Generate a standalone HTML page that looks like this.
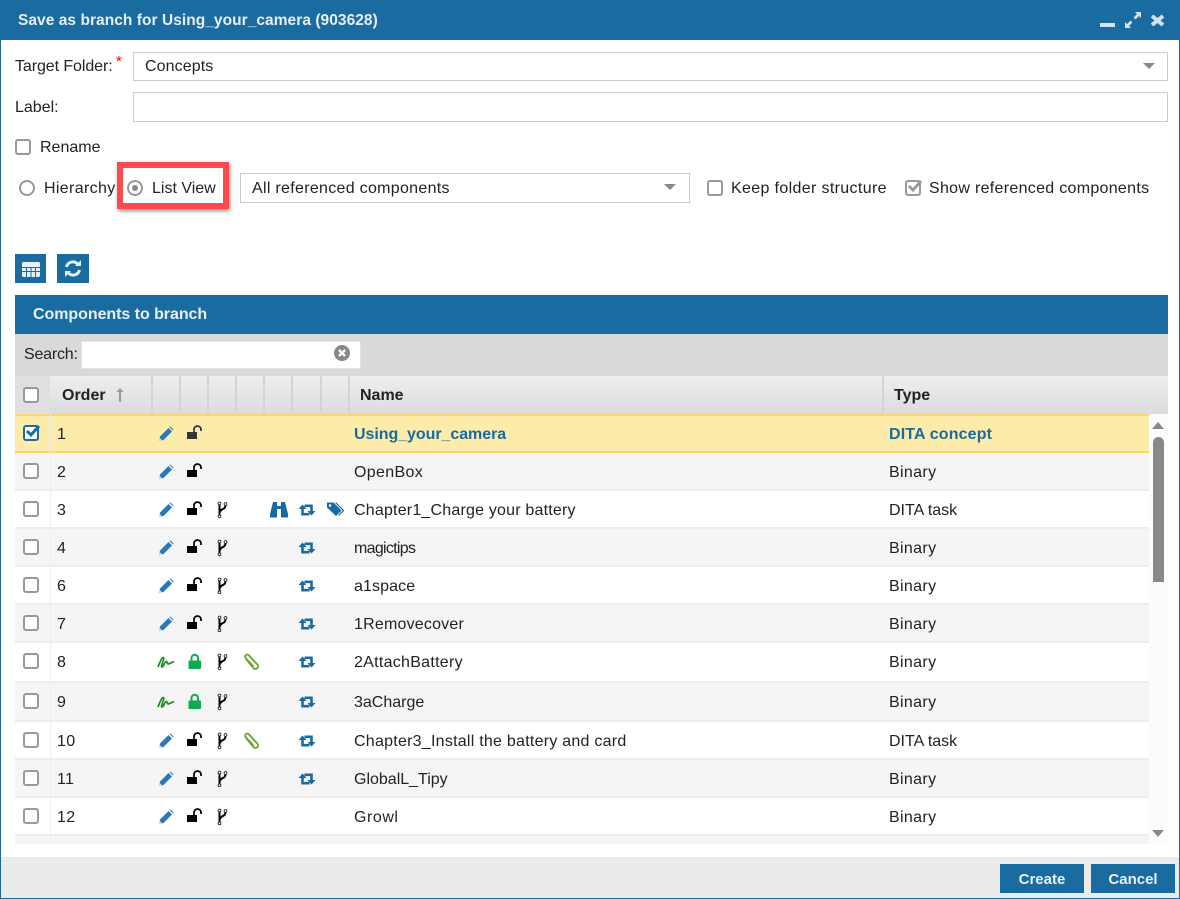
<!DOCTYPE html>
<html><head><meta charset="utf-8"><style>
html,body{margin:0;padding:0;width:1180px;height:899px;overflow:hidden;background:#fff}
body{position:relative;font-family:"Liberation Sans",sans-serif;font-size:16px;color:#222}
.a,.t{position:absolute}
.t{white-space:nowrap;line-height:20px;letter-spacing:.35px;margin-top:1px}
.b{position:absolute;box-sizing:border-box;border:1.5px solid #ccc;background:#fff}
.c{position:absolute;box-sizing:border-box;width:16px;height:16px;border:2px solid #999;border-radius:3px;background:#fff}
.r{position:absolute;box-sizing:border-box;left:15px;width:1134px;border-bottom:2px solid #ececec}
.g{background:#f5f5f5}
.s{position:absolute;top:376px;width:1.5px;height:37px;background:#d4d4d4}
svg.i{position:absolute;width:18px;height:18px;overflow:visible}
.h{font-weight:bold;color:#fff;letter-spacing:0}
.btn{position:absolute;top:864px;width:84px;height:29px;background:#1a6b9f;color:#e8f2f8;font-weight:bold;font-size:15px;line-height:32px;text-align:center}
</style></head><body>
<svg width="0" height="0" style="position:absolute"><defs>
<symbol id="pen" viewBox="0 0 18 18"><path d="M2 16l1-4.500L11.500 3 15 6.500 6.500 15z" fill="#2a78b4"/><path d="M12.500 2l1-.5 3 3-.5 1z" fill="#2a78b4"/><path d="M2 16l.8-3 2.200 2.200z" fill="#cfe0ee"/></symbol>
<symbol id="un" viewBox="0 0 18 18"><rect x="1" y="8" width="10" height="7" fill="#000"/><path d="M8 8V5.500a3.300 3.300 0 0 1 7 0V7" fill="none" stroke="#000" stroke-width="1.700"/></symbol>
<symbol id="un2" viewBox="0 0 18 18"><rect x="1" y="8" width="10" height="7" fill="#333"/><path d="M8 8V5.500a3.300 3.300 0 0 1 7 0V7" fill="none" stroke="#333" stroke-width="1.700"/></symbol>
<symbol id="br" viewBox="0 0 18 18"><path d="M5.500 3.500V15M5.500 11.500Q7 8.500 9 8 11.500 7 11.500 4" fill="none" stroke="#000" stroke-width="2"/><circle cx="5.500" cy="2.500" r="1.400" fill="#fff" stroke="#222" stroke-width=".9"/><circle cx="11.500" cy="3" r="1.400" fill="#fff" stroke="#222" stroke-width=".9"/><circle cx="5.500" cy="15.300" r="1.400" fill="#fff" stroke="#222" stroke-width=".9"/></symbol>
<symbol id="bin" viewBox="0 0 18 18"><path d="M0 16.500v-3.500L3 1h4v15.500zM11 16.500V1h4l3 12v3.500z" fill="#1a6b9f"/><rect x="7" y="5" width="4" height="3" fill="#1a6b9f"/></symbol>
<symbol id="ret" viewBox="0 0 18 18"><path d="M4.500 7v6.200h7M13.500 11V4.800H6.500" fill="none" stroke="#1a6b9f" stroke-width="2.600"/><path d="M.5 8L4.500 3.500 8.500 8zM9.500 10L13.500 14.500 17.500 10z" fill="#1a6b9f"/></symbol>
<symbol id="tag" viewBox="0 0 18 18"><path d="M1 2.500h6.500l8 8-5.500 5.500-9-8.500z" fill="#1a6b9f"/><path d="M9.500 2.500l8 8-5 5" fill="none" stroke="#1a6b9f" stroke-width="1.200"/><circle cx="4" cy="5.500" r="1.200" fill="#fff"/></symbol>
<symbol id="sig" viewBox="0 0 18 18"><path d="M1 14C3 9 5 4 6.500 4.500 8 6 3 14 5 14 7 13.500 8 8 9.500 8.500 11 9 10 11.500 11.500 11L17 8.500" fill="none" stroke="#1a8a1a" stroke-width="1.700"/></symbol>
<symbol id="lock" viewBox="0 0 18 18"><rect x="1.500" y="7.500" width="12.500" height="8.500" rx="1" fill="#0faa50"/><path d="M4.500 8V5a3.200 3.200 0 0 1 6.500 0V8" fill="none" stroke="#0faa50" stroke-width="2"/></symbol>
<symbol id="clip" viewBox="0 0 18 18"><path d="M3 6L10.500 15a2.500 2.500 0 0 0 4-3.300L6 2.500A2 2 0 0 0 2.500 5L10.500 13.500" fill="none" stroke="#6aa52a" stroke-width="1.800"/></symbol>
</defs></svg>

<div class="a" style="left:0;top:0;width:1180px;height:40px;background:#1a6b9f"></div>
<div class="a" style="left:0;top:40px;width:1px;height:859px;background:#1a6b9f"></div>
<div class="a" style="right:0;top:40px;width:1px;height:859px;background:#1a6b9f"></div>
<div class="a" style="left:0;top:898px;width:1180px;height:1px;background:#1a6b9f"></div>
<div class="t h" style="left:18px;top:10px;color:#e6f0f6;font-size:15.500px;letter-spacing:.05px">Save as branch for Using_your_camera (903628)</div>
<div class="a" style="left:1100px;top:23px;width:15px;height:4px;background:#d3e3ed"></div>
<svg class="a" style="left:1124px;top:11px" width="18" height="18"><path d="M1 17v-6l2 2 3.500-3.500 2 2L5 15l2 2zM17 1v6l-2-2-3.500 3.500-2-2L13 3l-2-2z" fill="#d3e3ed"/></svg>
<svg class="a" style="left:1150px;top:13px" width="15" height="14"><path d="M2 3l11 9M13 3L2 12" stroke="#d3e3ed" stroke-width="4"/></svg>

<div class="t" style="left:15px;top:56px;letter-spacing:-.08px">Target Folder:</div>
<div class="t" style="left:116px;top:51px;color:#e00;font-size:15px">*</div>
<div class="b" style="left:133px;top:52px;width:1035px;height:29px"></div>
<div class="t" style="left:145px;top:56px;letter-spacing:.1px">Concepts</div>
<div class="a" style="left:1143px;top:63px;border:6px solid transparent;border-top:6px solid #888;border-bottom:0"></div>
<div class="t" style="left:15px;top:97px;letter-spacing:0">Label:</div>
<div class="b" style="left:133px;top:92px;width:1035px;height:30px"></div>
<div class="c" style="left:15px;top:139px"></div>
<div class="t" style="left:40px;top:137px;letter-spacing:0">Rename</div>

<div class="a" style="left:19px;top:180px;width:16px;height:16px;box-sizing:border-box;border:2px solid #999;border-radius:50%"></div>
<div class="t" style="left:44px;top:178px">Hierarchy</div>
<div class="a" style="left:117px;top:162px;width:112px;height:47px;box-sizing:border-box;border:6px solid #fd4a4e;box-shadow:1px 2px 4px rgba(0,0,0,.45)"></div>
<div class="a" style="left:127px;top:180px;width:16px;height:16px;box-sizing:border-box;border:2px solid #999;border-radius:50%"></div>
<div class="a" style="left:132px;top:185px;width:6px;height:6px;border-radius:50%;background:#888"></div>
<div class="t" style="left:152px;top:178px;letter-spacing:0">List View</div>
<div class="b" style="left:240px;top:173px;width:450px;height:30px"></div>
<div class="t" style="left:252px;top:178px;letter-spacing:.3px">All referenced components</div>
<div class="a" style="left:664px;top:184px;border:6px solid transparent;border-top:6px solid #888;border-bottom:0"></div>
<div class="c" style="left:707px;top:180px"></div>
<div class="t" style="left:731px;top:178px">Keep folder structure</div>
<div class="c" style="left:905px;top:180px"></div>
<svg class="a" style="left:906px;top:178px" width="18" height="16"><path d="M3 8l4 4 8-9" fill="none" stroke="#999" stroke-width="3"/></svg>
<div class="t" style="left:929px;top:178px;letter-spacing:.3px">Show referenced components</div>

<div class="a" style="left:15px;top:254px;width:31px;height:29px;background:#1a6b9f"></div>
<svg class="a" style="left:22px;top:262px" width="18" height="15"><rect x="0" y="0" width="18" height="15" rx="1.500" fill="#e4eff6"/><path d="M0 5.500h18M0 9.500h18M4.500 5v10M9 5v10M13.500 5v10" stroke="#1a6b9f" stroke-width="1"/></svg>
<div class="a" style="left:57px;top:254px;width:32px;height:29px;background:#1a6b9f"></div>
<svg class="a" style="left:64px;top:260px" width="18" height="17" fill="none"><path d="M2.500 7A6.500 6.500 0 0 1 14 4.500" stroke="#e4eff6" stroke-width="3"/><path d="M11 6h6V0z" fill="#e4eff6"/><path d="M15.500 10A6.500 6.500 0 0 1 4 12.500" stroke="#e4eff6" stroke-width="3"/><path d="M7 11H1v6z" fill="#e4eff6"/></svg>

<div class="a" style="left:15px;top:295px;width:1153px;height:39px;background:#1a6b9f"></div>
<div class="t h" style="left:33px;top:304px;color:#e6f0f6;letter-spacing:-.05px">Components to branch</div>
<div class="a" style="left:15px;top:334px;width:1153px;height:42px;background:#d9d9d9"></div>
<div class="t" style="left:24px;top:344px;letter-spacing:-.2px">Search:</div>
<div class="a" style="left:81px;top:341px;width:280px;height:28px;background:#fff;box-sizing:border-box;border:1px solid #e4e4e4"></div>
<svg class="a" style="left:334px;top:345px" width="16" height="16"><circle cx="8" cy="8" r="8" fill="#888"/><path d="M5 5l6 6M11 5l-6 6" stroke="#fff" stroke-width="2.400"/></svg>

<div class="a" style="left:15px;top:376px;width:1153px;height:38px;background:linear-gradient(#eeeeee,#dcdcdc)"></div>
<div class="a" style="left:15px;top:376px;width:35px;height:38px;background:#dfdfdf"></div>
<div class="s" style="left:151px"></div><div class="s" style="left:179px"></div><div class="s" style="left:207px"></div><div class="s" style="left:235px"></div><div class="s" style="left:263px"></div><div class="s" style="left:291px"></div><div class="s" style="left:320px"></div><div class="s" style="left:348px"></div><div class="s" style="left:882px"></div>
<div class="c" style="left:23px;top:387px"></div>
<div class="t h" style="left:62px;top:385px;color:#222">Order</div>
<svg class="a" style="left:115px;top:387px" width="10" height="16"><path d="M5 1L1.500 5h2.500v10h2V5h2.500z" fill="#999"/></svg>
<div class="t h" style="left:360px;top:385px;color:#222">Name</div>
<div class="t h" style="left:894px;top:385px;color:#222">Type</div>

<div class="a" style="left:1149px;top:414px;width:19px;height:430px;background:#fcfcfc"></div>
<div class="a" style="left:1152px;top:422px;border:6.500px solid transparent;border-bottom:7px solid #888;border-top:0"></div>
<div class="a" style="left:1153px;top:437px;width:11px;height:145px;background:#888;border-radius:6px 6px 0 0"></div>
<div class="a" style="left:1152px;top:830px;border:6.500px solid transparent;border-top:7px solid #888;border-bottom:0"></div>

<div class="r" style="top:414px;height:39px;background:#fdeba9;border-top:2px solid #fad766;border-bottom:2px solid #fad766"></div>
<div class="r g" style="top:453px;height:38px"></div>
<div class="r" style="top:491px;height:38px"></div>
<div class="r g" style="top:529px;height:38px"></div>
<div class="r" style="top:567px;height:38px"></div>
<div class="r g" style="top:605px;height:38px"></div>
<div class="r" style="top:643px;height:40px"></div>
<div class="r g" style="top:683px;height:39px"></div>
<div class="r" style="top:722px;height:38px"></div>
<div class="r g" style="top:760px;height:38px"></div>
<div class="r" style="top:798px;height:38px"></div>
<div class="r g" style="top:836px;height:8px;border:0"></div>
<div class="a" style="left:50px;top:414px;width:1px;height:430px;background:#eee"></div>

<div class="c" style="left:23px;top:425px;border-color:#1a6b9f"></div>
<svg class="a" style="left:24px;top:424px" width="18" height="15"><path d="M3 7l4 4 8-9" fill="none" stroke="#1a6b9f" stroke-width="3"/></svg>
<div class="c" style="left:23px;top:463px"></div><div class="c" style="left:23px;top:501px"></div><div class="c" style="left:23px;top:539px"></div><div class="c" style="left:23px;top:577px"></div><div class="c" style="left:23px;top:615px"></div><div class="c" style="left:23px;top:653px"></div><div class="c" style="left:23px;top:693px"></div><div class="c" style="left:23px;top:732px"></div><div class="c" style="left:23px;top:770px"></div><div class="c" style="left:23px;top:808px"></div>

<div class="t" style="left:57px;top:424px">1</div><div class="t" style="left:57px;top:462px">2</div><div class="t" style="left:57px;top:500px">3</div><div class="t" style="left:57px;top:538px">4</div><div class="t" style="left:57px;top:576px">6</div><div class="t" style="left:57px;top:614px">7</div><div class="t" style="left:57px;top:652px">8</div><div class="t" style="left:57px;top:692px">9</div><div class="t" style="left:57px;top:731px">10</div><div class="t" style="left:57px;top:769px">11</div><div class="t" style="left:57px;top:807px">12</div>

<div class="t h" style="left:354px;top:424px;color:#1a6b9f;letter-spacing:-.05px">Using_your_camera</div><div class="t h" style="left:889px;top:424px;color:#1a6b9f;letter-spacing:.15px">DITA concept</div>
<div class="t" style="left:354px;top:462px">OpenBox</div><div class="t" style="left:889px;top:462px">Binary</div>
<div class="t" style="left:354px;top:500px;letter-spacing:.2px">Chapter1_Charge your battery</div><div class="t" style="left:889px;top:500px;letter-spacing:0">DITA task</div>
<div class="t" style="left:354px;top:538px;letter-spacing:-.7px">magictips</div><div class="t" style="left:889px;top:538px">Binary</div>
<div class="t" style="left:354px;top:576px;letter-spacing:.1px">a1space</div><div class="t" style="left:889px;top:576px">Binary</div>
<div class="t" style="left:354px;top:614px;letter-spacing:.2px">1Removecover</div><div class="t" style="left:889px;top:614px">Binary</div>
<div class="t" style="left:354px;top:652px;letter-spacing:.28px">2AttachBattery</div><div class="t" style="left:889px;top:652px">Binary</div>
<div class="t" style="left:354px;top:692px;letter-spacing:0">3aCharge</div><div class="t" style="left:889px;top:692px">Binary</div>
<div class="t" style="left:354px;top:731px;letter-spacing:.25px">Chapter3_Install the battery and card</div><div class="t" style="left:889px;top:731px;letter-spacing:0">DITA task</div>
<div class="t" style="left:354px;top:769px;letter-spacing:0">GlobalL_Tipy</div><div class="t" style="left:889px;top:769px">Binary</div>
<div class="t" style="left:354px;top:807px;letter-spacing:.55px">Growl</div><div class="t" style="left:889px;top:807px">Binary</div>

<svg class="i" style="left:157px;top:425px"><use href="#pen"/></svg><svg class="i" style="left:186px;top:424px"><use href="#un2"/></svg>
<svg class="i" style="left:157px;top:463px"><use href="#pen"/></svg><svg class="i" style="left:186px;top:462px"><use href="#un"/></svg>
<svg class="i" style="left:157px;top:501px"><use href="#pen"/></svg><svg class="i" style="left:186px;top:500px"><use href="#un"/></svg><svg class="i" style="left:214px;top:501px"><use href="#br"/></svg><svg class="i" style="left:270px;top:501px"><use href="#bin"/></svg><svg class="i" style="left:298px;top:501px"><use href="#ret"/></svg><svg class="i" style="left:326px;top:500px"><use href="#tag"/></svg>
<svg class="i" style="left:157px;top:539px"><use href="#pen"/></svg><svg class="i" style="left:186px;top:538px"><use href="#un"/></svg><svg class="i" style="left:214px;top:539px"><use href="#br"/></svg><svg class="i" style="left:298px;top:539px"><use href="#ret"/></svg>
<svg class="i" style="left:157px;top:577px"><use href="#pen"/></svg><svg class="i" style="left:186px;top:576px"><use href="#un"/></svg><svg class="i" style="left:214px;top:577px"><use href="#br"/></svg><svg class="i" style="left:298px;top:577px"><use href="#ret"/></svg>
<svg class="i" style="left:157px;top:615px"><use href="#pen"/></svg><svg class="i" style="left:186px;top:614px"><use href="#un"/></svg><svg class="i" style="left:214px;top:615px"><use href="#br"/></svg><svg class="i" style="left:298px;top:615px"><use href="#ret"/></svg>
<svg class="i" style="left:157px;top:653px"><use href="#sig"/></svg><svg class="i" style="left:187px;top:653px"><use href="#lock"/></svg><svg class="i" style="left:214px;top:653px"><use href="#br"/></svg><svg class="i" style="left:243px;top:653px"><use href="#clip"/></svg><svg class="i" style="left:298px;top:653px"><use href="#ret"/></svg>
<svg class="i" style="left:157px;top:693px"><use href="#sig"/></svg><svg class="i" style="left:187px;top:693px"><use href="#lock"/></svg><svg class="i" style="left:214px;top:693px"><use href="#br"/></svg><svg class="i" style="left:298px;top:693px"><use href="#ret"/></svg>
<svg class="i" style="left:157px;top:732px"><use href="#pen"/></svg><svg class="i" style="left:186px;top:731px"><use href="#un"/></svg><svg class="i" style="left:214px;top:732px"><use href="#br"/></svg><svg class="i" style="left:243px;top:732px"><use href="#clip"/></svg><svg class="i" style="left:298px;top:732px"><use href="#ret"/></svg>
<svg class="i" style="left:157px;top:770px"><use href="#pen"/></svg><svg class="i" style="left:186px;top:769px"><use href="#un"/></svg><svg class="i" style="left:214px;top:770px"><use href="#br"/></svg><svg class="i" style="left:298px;top:770px"><use href="#ret"/></svg>
<svg class="i" style="left:157px;top:808px"><use href="#pen"/></svg><svg class="i" style="left:186px;top:807px"><use href="#un"/></svg><svg class="i" style="left:214px;top:808px"><use href="#br"/></svg>

<div class="a" style="left:1px;top:857px;width:1178px;height:41px;background:#ebebeb"></div>
<div class="btn" style="left:1000px">Create</div>
<div class="btn" style="left:1091px">Cancel</div>
</body></html>
